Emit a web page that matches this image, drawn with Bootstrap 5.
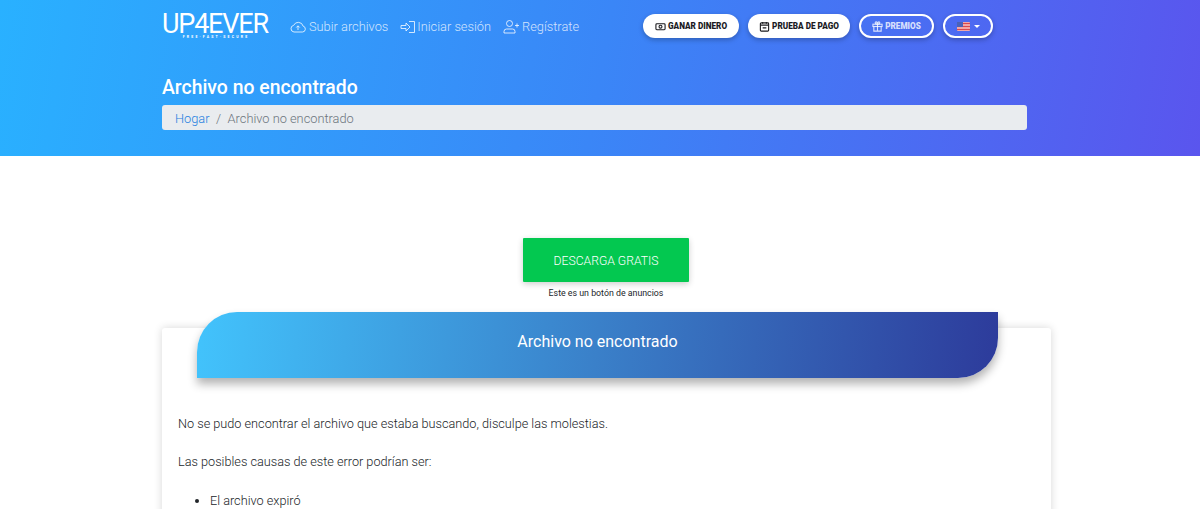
<!DOCTYPE html>
<html lang="es">

<head>
  <meta charset="UTF-8">
  <meta name="viewport" content="width=device-width, initial-scale=1">
  <title>Archivo no encontrado - UP4EVER</title>
  <link href="https://cdn.jsdelivr.net/npm/bootstrap@5.3.3/dist/css/bootstrap.min.css" rel="stylesheet">
  <style>
    body {
      font-family: Roboto, "Liberation Sans", sans-serif;
      font-weight: 300;
      font-size: 12.7px;
      color: #212529;
      background: #fff;
    }

    .page-wrap {
      width: 889px;
      margin-left: 162px;
    }

    .top-head {
      height: 156px;
      background: linear-gradient(100deg, #29b1ff 0%, #3a86f7 50%, #5a55ee 100%);
    }

    .top-nav {
      height: 52px;
      padding-top: 14px;
    }

    .logo-box {
      width: 108px;
      height: 24px;
      color: #fff;
      line-height: 1;
      margin-right: 20px;
      flex-shrink: 0;
    }

    .logo-main {
      display: block;
      font-size: 27px;
      font-weight: 400;
      letter-spacing: -1.2px;
      height: 20px;
      line-height: 20px;
    }

    .logo-sub {
      display: block;
      font-size: 3.5px;
      font-weight: 700;
      letter-spacing: 2.2px;
      text-align: center;
      margin-top: 1px;
      line-height: 4px;
      white-space: nowrap;
    }

    .head-link {
      color: rgba(255, 255, 255, .78);
      text-decoration: none;
      font-size: 12.8px;
      line-height: 24px;
      gap: 3px;
      padding-top: 1px;
    }

    .head-link-tight {
      gap: 1px;
    }

    .head-links {
      gap: 12px;
    }

    .head-btns {
      margin-left: 64px;
      gap: 9px;
    }

    .pill-btn {
      height: 24px;
      border-radius: 12px;
      background: #fff;
      color: #1b1b1f;
      font-size: 8.2px;
      font-weight: 900;
      text-transform: uppercase;
      text-decoration: none;
      box-shadow: 0 2px 5px rgba(0, 0, 0, .25);
      gap: 2px;
    }

    .pill-one { width: 96px; }
    .pill-two { width: 102px; }

    .pill-line {
      background: transparent;
      border: 2px solid #fff;
      color: #fff;
    }

    .pill-three { width: 75px; color: rgba(255, 255, 255, .8); }
    .pill-four { width: 50px; gap: 4px; }

    .caret-mark {
      width: 0;
      height: 0;
      border-left: 3px solid transparent;
      border-right: 3px solid transparent;
      border-top: 3px solid #fff;
    }

    .head-title {
      font-size: 19.4px;
      font-weight: 500;
      color: #fff;
      margin: 0;
      line-height: 22px;
      padding-top: 25px;
    }

    .crumb-bar {
      width: 865px;
      height: 25px;
      margin-top: 6px;
      padding: 0 13px;
      background: #e9ecef;
      border-radius: 3px;
      line-height: 27px;
      font-size: 12.8px;
      color: #6c757d;
    }

    .crumb-bar a {
      color: #1f7fe0;
      text-decoration: none;
    }

    .crumb-sep {
      padding: 0 6.500px;
    }

    .ad-block {
      padding-top: 82px;
      padding-right: 1px;
    }

    .ad-btn {
      width: 166px;
      height: 44px;
      line-height: 46px;
      background: #03c850;
      color: #fff;
      font-size: 12.2px;
      font-weight: 300;
      text-decoration: none;
      border-radius: 1px;
      box-shadow: 0 2px 6px rgba(0, 0, 0, .2);
    }

    .ad-note {
      font-size: 8.8px;
      font-weight: 400;
      line-height: 12px;
      margin-top: 5px;
    }

    .main-box {
      margin-top: 29px;
      background: #fff;
      border-radius: 3px;
      box-shadow: 0 0 8px rgba(0, 0, 0, .16);
      padding-bottom: 60px;
    }

    .ribbon-title {
      width: 801px;
      height: 66px;
      margin: 0 0 0 35px;
      position: relative;
      top: -16px;
      border-radius: 40px 0 40px 0;
      background: linear-gradient(95deg, #42c3fc 0%, #3a80c9 50%, #2d3b9b 100%);
      box-shadow: 0 6px 10px rgba(0, 0, 0, .3);
      color: #fff;
      font-size: 16px;
      font-weight: 400;
      line-height: 60px;
      text-align: center;
    }

    .box-text {
      padding: 19px 16px 0;
      line-height: 21px;
    }

    .box-text p {
      margin-bottom: 17px;
    }

    .box-text ul {
      padding-left: 32px;
      margin: 0;
      padding-top: 1px;
    }

    .head-icon {
      width: 16px;
      height: 16px;
      fill: none;
      stroke: currentColor;
      stroke-width: 1;
    }

    .pill-icon {
      width: 11px;
      height: 11px;
      fill: none;
      stroke: currentColor;
      stroke-width: 1.2;
    }
  </style>
</head>

<body>
  <header class="top-head">
    <div class="page-wrap">
      <nav class="top-nav d-flex align-items-start">
        <a class="logo-box text-decoration-none" href="#">
          <span class="logo-main">UP4EVER</span>
          <span class="logo-sub">FREE·FAST·SECURE</span>
        </a>
        <div class="head-links d-flex">
          <a class="head-link d-flex align-items-center" href="#">
            <svg class="head-icon" viewBox="0 0 16 16"><path d="M4 13h8.500a3 3 0 0 0 .6-5.900A5 5 0 0 0 3.700 6.300 3.400 3.400 0 0 0 4 13z"/><path d="M8 11V7M6.300 8.500 8 6.800l1.700 1.700"/></svg>
            Subir archivos
          </a>
          <a class="head-link head-link-tight d-flex align-items-center" href="#">
            <svg class="head-icon" viewBox="0 0 16 16"><path d="M1 6.500h5V4l4 4-4 4V9.500H1z"/><path d="M9 2.500h5.500v11H9"/></svg>
            Iniciar sesión
          </a>
          <a class="head-link d-flex align-items-center" href="#">
            <svg class="head-icon" viewBox="0 0 16 16"><circle cx="6.500" cy="4.500" r="3"/><path d="M1 14v-1.500A2.500 2.500 0 0 1 3.500 10h6a2.500 2.500 0 0 1 2.500 2.500V14zM12 6.500h4M14 4.500v4"/></svg>
            Regístrate
          </a>
        </div>
        <div class="head-btns d-flex">
          <a class="pill-btn pill-one d-flex align-items-center justify-content-center" href="#">
            <svg class="pill-icon" viewBox="0 0 12 12"><rect x="1" y="3" width="10" height="6.500" rx="1"/><circle cx="6" cy="6.200" r="1.600"/></svg>
            Ganar dinero
          </a>
          <a class="pill-btn pill-two d-flex align-items-center justify-content-center" href="#">
            <svg class="pill-icon" viewBox="0 0 12 12"><rect x="1.500" y="2" width="9" height="9" rx="1"/><path d="M1.500 4.500h9M4 1v2M8 1v2M4 7.500h4"/></svg>
            Prueba de pago
          </a>
          <a class="pill-btn pill-line pill-three d-flex align-items-center justify-content-center" href="#">
            <svg class="pill-icon" viewBox="0 0 12 12"><rect x="1" y="3.500" width="10" height="2.500"/><path d="M2 6v5h8V6M6 3.500V11M6 3.500C3 3.500 3 1 4.500 1S6 3.500 6 3.500s0-2.500 1.500-2.500S9 3.500 6 3.500z"/></svg>
            Premios
          </a>
          <a class="pill-btn pill-line pill-four d-flex align-items-center justify-content-center" href="#">
            <svg width="13" height="9" viewBox="0 0 13 9"><rect width="13" height="9" rx="1" fill="#f2a6a6"/><path d="M0 1.500h13M0 4.500h13M0 7.500h13" stroke="#d9484f" stroke-width="1"/><rect width="6" height="5" fill="#4b62b8"/></svg>
            <span class="caret-mark"></span>
          </a>
        </div>
      </nav>
      <h1 class="head-title">Archivo no encontrado</h1>
      <div class="crumb-bar">
        <a href="#">Hogar</a><span class="crumb-sep">/</span>Archivo no encontrado
      </div>
    </div>
  </header>

  <main class="page-wrap">
    <div class="ad-block text-center">
      <a class="ad-btn d-inline-block" href="#">DESCARGA GRATIS</a>
      <div class="ad-note">Este es un botón de anuncios</div>
    </div>
    <section class="main-box">
      <h2 class="ribbon-title">Archivo no encontrado</h2>
      <div class="box-text">
        <p>No se pudo encontrar el archivo que estaba buscando, disculpe las molestias.</p>
        <p>Las posibles causas de este error podrían ser:</p>
        <ul>
          <li>El archivo expiró</li>
        </ul>
      </div>
    </section>
  </main>

  <script src="https://cdn.jsdelivr.net/npm/bootstrap@5.3.3/dist/js/bootstrap.bundle.min.js"></script>
</body>

</html>
